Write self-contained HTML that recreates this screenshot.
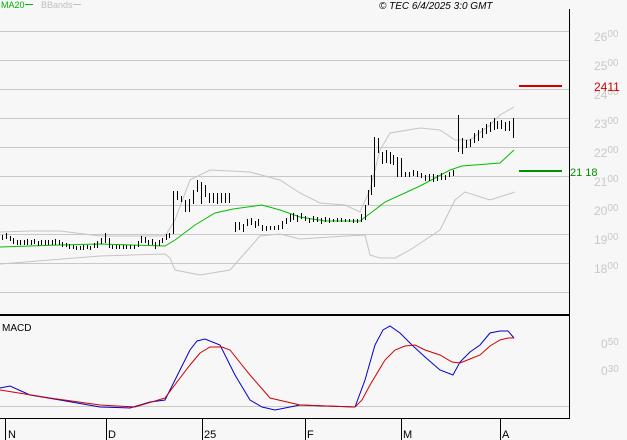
<!DOCTYPE html>
<html><head><meta charset="utf-8"><style>
html,body{margin:0;padding:0;background:#f7f7f7}
body{width:627px;height:440px;overflow:hidden;position:relative;font-family:"Liberation Sans",sans-serif}
svg{position:absolute;left:0;top:0}
</style></head><body>
<svg width="627" height="440" viewBox="0 0 627 440" font-family="Liberation Sans, sans-serif">
<rect width="627" height="440" fill="#f7f7f7"/>
<g stroke="#c8c8c8" stroke-width="1">
<line x1="0" y1="31.5" x2="569" y2="31.5"/><line x1="0" y1="60.5" x2="569" y2="60.5"/>
<line x1="0" y1="89.5" x2="569" y2="89.5"/><line x1="0" y1="118.5" x2="569" y2="118.5"/>
<line x1="0" y1="147.5" x2="569" y2="147.5"/><line x1="0" y1="176.5" x2="569" y2="176.5"/>
<line x1="0" y1="205.5" x2="569" y2="205.5"/><line x1="0" y1="234.5" x2="569" y2="234.5"/>
<line x1="0" y1="263.5" x2="569" y2="263.5"/><line x1="0" y1="292.5" x2="569" y2="292.5"/>
<line x1="0" y1="406.5" x2="569" y2="406.5"/>
</g>
<g fill="none" stroke="#c4c4c4" stroke-width="1">
<polyline points="0,232 30,231 60,231 100,236 165,236 175,220 190,180 210,170 250,172 280,180 300,193 320,203 345,205 360,212 370,190 380,150 390,133 420,128 440,130 455,140 470,140 490,125 500,115 514,107"/>
<polyline points="0,264 50,260 100,256 165,254 170,258 175,270 200,275 230,270 260,236 280,234 300,239 330,237 365,235 370,255 380,258 395,258 410,250 440,230 455,200 465,192 490,200 515,192"/>
</g>
<polyline fill="none" stroke="#00c000" stroke-width="1" points="0,247 60,245 100,244 165,246 175,240 195,225 215,213 233,209 262,205 280,210 300,217 325,221 360,221 372,212 385,202 420,186 450,170 462,166 500,163 514,150"/>
<g stroke="#000" stroke-width="1" fill="none">
<path d="M2.5 235v5M6.5 233v6M10.5 236v5M13.5 238v6M17.5 240v5M20.5 240v5M24.5 240v5M27.5 239v6M31.5 240v5M34.5 239v5M38.5 241v5M41.5 240v5M45.5 240v5M48.5 240v5M52.5 240v5M55.5 239v6M59.5 240v5M62.5 242v5M66.5 243v4M69.5 244v5M73.5 245v4M76.5 246v4M80.5 246v4M83.5 245v5M87.5 245v4M90.5 246v4M94.5 243v5M97.5 241v7M101.5 238v6M105.5 233v10M109.5 238v10M112.5 245v4M116.5 245v4M119.5 245v4M123.5 245v4M126.5 245v4M130.5 245v4M134.5 245v4M138.5 241v6M141.5 236v7M145.5 237v6M148.5 240v5M152.5 239v6M155.5 242v7M159.5 240v6M162.5 238v5M166.5 234v6M169.5 233v5M173.5 191v43M177.5 191v9M181.5 196v6M185.5 200v12M189.5 199v13M193.5 190v14M197.5 180v12M201.5 182v22M205.5 185v12M209.5 193v10M213.5 193v10M217.5 193v11M221.5 193v10M225.5 193v10M229.5 193v10"/>
<path d="M235.5 222v10M239.5 222v8M243.5 224v8M247.5 219v7M251.5 218v7M255.5 221v7M258.5 219v7M262.5 225v6M266.5 226v5M270.5 226v4M274.5 226v4M278.5 225v5M282.5 221v8M286.5 218v6M290.5 214v8M293.5 213v7M297.5 215v7M301.5 213v6M305.5 216v5M309.5 218v5M313.5 216v6M317.5 217v5M321.5 218v6M325.5 217v5M329.5 218v5M333.5 219v3M337.5 218v4M341.5 218v4M345.5 219v3M349.5 219v3M353.5 219v4M357.5 219v4M361.5 214v8M365.5 205v15M368.5 190v15M371.5 175v20M374.5 137v50M378.5 138v15M382.5 152v12M386.5 150v13M390.5 152v12M393.5 155v10M397.5 157v20M401.5 158v19M405.5 172v5M409.5 172v5M413.5 170v6M417.5 171v6M421.5 173v5M425.5 175v6M429.5 174v7M433.5 174v8M437.5 175v6M441.5 173v7M445.5 175v5M449.5 172v5M453.5 170v6"/>
<path d="M458.5 115v37M462.5 138v16M466.5 140v8M470.5 139v8M474.5 133v10M478.5 130v11M482.5 128v10M486.5 124v10M490.5 122v10M494.5 118v12M497.5 121v8M501.5 120v9M505.5 122v9M509.5 121v10M513.5 118v20"/>
</g>
<line x1="519" y1="86" x2="562" y2="86" stroke="#d00000" stroke-width="2"/>
<line x1="519" y1="171" x2="562" y2="171" stroke="#009000" stroke-width="2"/>
<polyline fill="none" stroke="#0000d0" stroke-width="1" points="0,388 10,386 30,395 60,400 100,407 130,408 150,402 165,400 180,370 190,350 197,341 205,339 220,345 235,375 250,400 262,407 275,410 300,405 325,406 355,407 365,380 375,345 383,330 390,326 400,333 412,345 425,357 440,370 453,375 460,362 470,352 480,345 490,333 500,331 508,331 514,338"/>
<polyline fill="none" stroke="#d00000" stroke-width="1" points="0,390 50,398 100,405 135,407 165,398 180,378 190,365 200,353 210,347 222,347 230,350 250,375 270,398 300,405 355,407 362,400 370,385 385,360 395,350 405,346 415,345 425,350 440,355 452,362 460,363 470,359 480,355 490,346 500,340 508,338 514,338"/>
<line x1="0" y1="315" x2="570" y2="315" stroke="#000" stroke-width="2"/>
<line x1="0" y1="418.5" x2="570" y2="418.5" stroke="#000" stroke-width="1"/>
<line x1="569.5" y1="9" x2="569.5" y2="419" stroke="#000" stroke-width="1"/>
<g stroke="#000"><line x1="5.5" y1="418" x2="5.5" y2="440"/><line x1="106.5" y1="418" x2="106.5" y2="440"/><line x1="202.5" y1="418" x2="202.5" y2="440"/><line x1="305.5" y1="418" x2="305.5" y2="440"/><line x1="401.5" y1="418" x2="401.5" y2="440"/><line x1="500.5" y1="418" x2="500.5" y2="440"/></g>
<g font-size="11" fill="#000"><text x="8" y="438">N</text><text x="108" y="438">D</text><text x="204" y="438">25</text><text x="307" y="438">F</text><text x="403" y="438">M</text><text x="502" y="438">A</text></g>
<text x="1" y="8" font-size="9" fill="#00b000">MA20</text>
<line x1="25" y1="4.5" x2="33" y2="4.5" stroke="#00c000"/>
<text x="41" y="8" font-size="9" fill="#c0c0c0">BBands</text>
<line x1="73" y1="4.5" x2="81" y2="4.5" stroke="#c0c0c0"/>
<text x="379" y="9" font-size="10" font-style="italic" fill="#000">© TEC 6/4/2025 3:0 GMT</text>
<text x="2" y="331" font-size="10" fill="#000">MACD</text>
<g fill="#c8c8c8" font-size="12">
<text x="594" y="41">26<tspan font-size="10" dy="-4">00</tspan></text>
<text x="594" y="70">25<tspan font-size="10" dy="-4">00</tspan></text>
<text x="594" y="99">24<tspan font-size="10" dy="-4">00</tspan></text>
<text x="594" y="128">23<tspan font-size="10" dy="-4">00</tspan></text>
<text x="594" y="157">22<tspan font-size="10" dy="-4">00</tspan></text>
<text x="594" y="186">21<tspan font-size="10" dy="-4">00</tspan></text>
<text x="594" y="215">20<tspan font-size="10" dy="-4">00</tspan></text>
<text x="594" y="244">19<tspan font-size="10" dy="-4">00</tspan></text>
<text x="594" y="273">18<tspan font-size="10" dy="-4">00</tspan></text>
<text x="601" y="348">0<tspan font-size="10" dy="-3">50</tspan></text>
<text x="601" y="375">0<tspan font-size="10" dy="-3">30</tspan></text>
</g>
<text x="594" y="91" font-size="12" fill="#d00000">2411</text>
<text x="570" y="176" font-size="11" fill="#009000">21 18</text>
</svg>
</body></html>
